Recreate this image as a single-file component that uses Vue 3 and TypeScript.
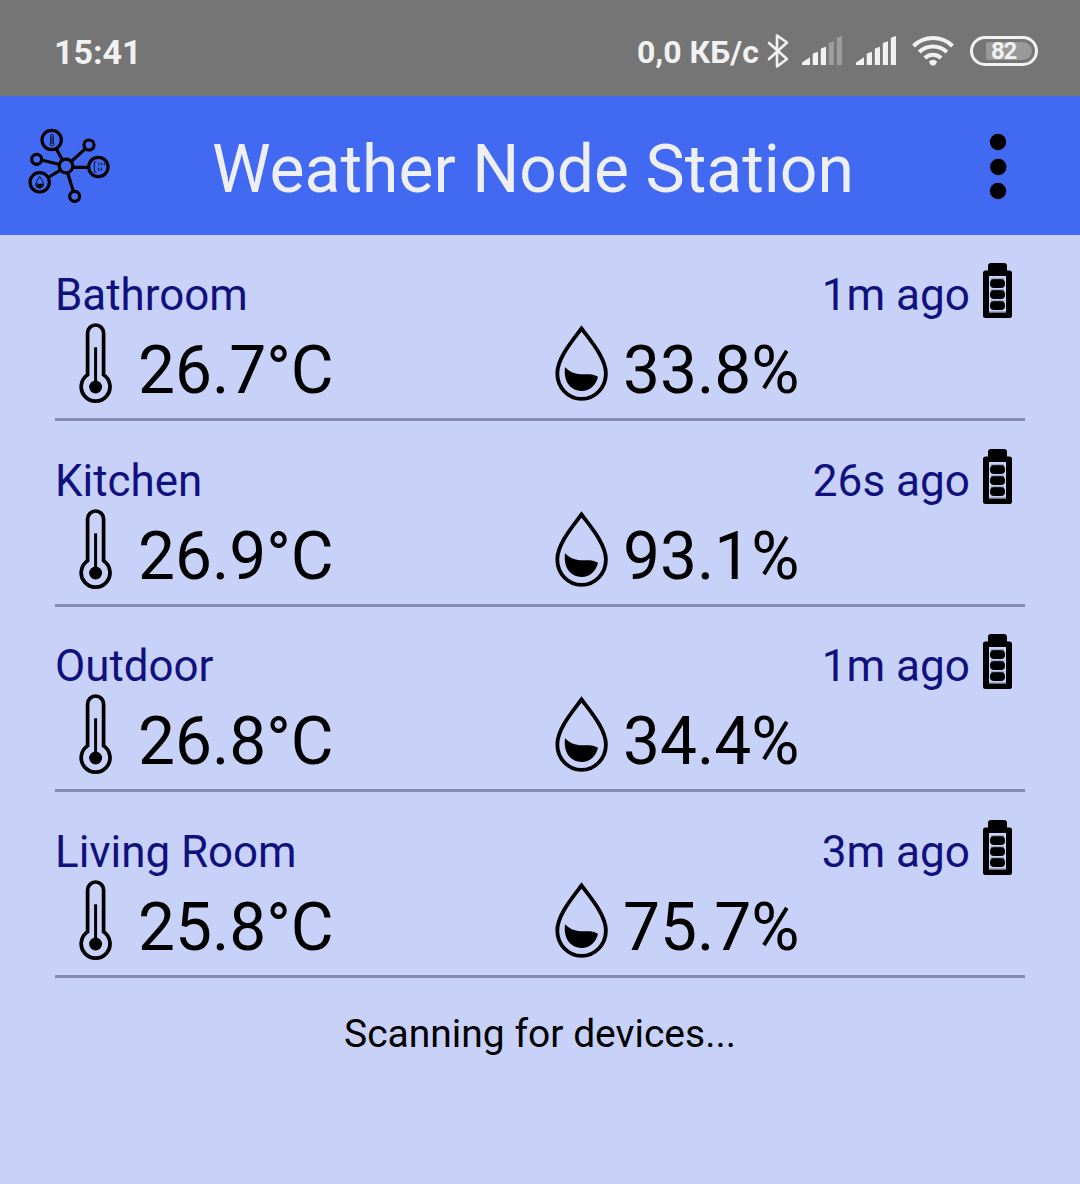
<script setup lang="ts">
interface Reading {
  name: string
  age: string
  temperature: string
  humidity: string
}

const readings: Reading[] = [
  { name: 'Bathroom', age: '1m ago', temperature: '26.7°C', humidity: '33.8%' },
  { name: 'Kitchen', age: '26s ago', temperature: '26.9°C', humidity: '93.1%' },
  { name: 'Outdoor', age: '1m ago', temperature: '26.8°C', humidity: '34.4%' },
  { name: 'Living Room', age: '3m ago', temperature: '25.8°C', humidity: '75.7%' },
]
</script>

<template>
  <div class="screen">
    <div class="status">
      <span class="clock">15:41</span>
      <span class="rate">0,0 КБ/с</span>
      <svg class="bluetooth" width="22" height="36" viewBox="0 0 22 36" fill="none" stroke="#f1f1f1" stroke-width="2.6" stroke-linejoin="round" stroke-linecap="round">
        <path d="M2 10 20 26 10 33.5V2.5L20 9.5 2 26" />
      </svg>
      <svg class="signal" width="41" height="30" viewBox="0 0 41 30" fill="#f1f1f1">
        <path d="M0 29v-2.500L8 21.300V29zM10.700 29V18.500q0-.8.8-1.200L16 15.800V29zM18.800 29V13.500q0-.8.8-1.200L24 10.800V29z" />
        <path opacity=".32" d="M26.800 29V8q0-.8.8-1.200L32 5.200V29zM34.800 29V2.800q0-.8.8-1.200L40 0V29z" />
      </svg>
      <svg class="signal" width="41" height="30" viewBox="0 0 41 30" fill="#f1f1f1">
        <path d="M0 29v-2.500L8 21.300V29zM10.700 29V18.500q0-.8.8-1.200L16 15.800V29zM18.800 29V13.500q0-.8.8-1.200L24 10.800V29zM26.800 29V8q0-.8.8-1.200L32 5.200V29zM34.800 29V2.800q0-.8.8-1.200L40 0V29z" />
      </svg>
      <svg class="wifi" width="42" height="31" viewBox="0 0 42 31" fill="none" stroke="#f1f1f1" stroke-width="4.200">
        <path d="M1.500 10.900A28 28 0 0 1 40.500 10.900M7.200 17A20 20 0 0 1 34.800 17M12.800 23A12 12 0 0 1 29.200 23" />
        <path d="M16.800 26.700q4.200-4 8.400 0l-1.700 2.700q-2.500 2.400-5 0z" fill="#f1f1f1" stroke="none" />
      </svg>
      <div class="charge"><span class="level">82</span></div>
    </div>

    <header class="bar">
      <svg class="logo" width="100" height="92" viewBox="0 0 300 276" fill="none" stroke="#000" stroke-width="9.500">
        <path d="M109 86 126 118M194 88 154 124M67 121 116 133M87 171 120 151M161 142H205M143 159 160 214" />
        <circle cx="138" cy="138" r="20.500" />
        <circle cx="95" cy="60" r="29" />
        <circle cx="235" cy="141" r="29" />
        <circle cx="59" cy="187" r="29" />
        <circle cx="207" cy="75" r="15" />
        <circle cx="50" cy="118" r="15" />
        <circle cx="164" cy="229" r="15" />
        <g stroke-width="2.500">
          <path d="M92 67V45q4-6 8 0v22q5 8-4 12-10-4-4-12M96 50v22" />
          <path d="M229 126h-6v30h6M237 128v8M245 128v8M253 128v8M236 143v10M244 143v10" />
          <path d="M59 169q-24 34 0 36 24-2 0-36" />
          <path d="M50 191q8 4 18 1-3 11-9 11-8-1-9-12z" fill="#000" />
        </g>
      </svg>
      <h1 class="title">Weather Node Station</h1>
      <svg class="menu" width="18" height="68" viewBox="0 0 18 68">
        <circle cx="9" cy="9" r="8.200" />
        <circle cx="9.300" cy="34" r="8.200" />
        <circle cx="9" cy="58" r="8.200" />
      </svg>
    </header>

    <main class="list">
      <section v-for="reading in readings" :key="reading.name" class="row">
        <div class="head">
          <span class="name">{{ reading.name }}</span>
          <span class="age">{{ reading.age }}</span>
          <svg class="battery" width="29" height="55" viewBox="0 0 29 55">
            <path fill-rule="evenodd" d="M8 0h13q3 0 3 3v4.500h2.500q2.500 0 2.500 2.500v42.500q0 2.500-2.500 2.500h-24Q0 55 0 52.500V10q0-2.500 2.500-2.500H5V3q0-3 3-3zM6 13v36.500h17V13z" />
            <path fill="#777c95" d="M8 15.500h13v2H8zM8 26.500h13v2H8zM8 37.500h13v2H8zM6 48.500h17v1H6z" />
            <rect x="7" y="16.300" width="15" height="8.700" rx="4" />
            <rect x="7" y="27.300" width="15" height="8.700" rx="4" />
            <rect x="7" y="38.300" width="15" height="8.700" rx="4" />
          </svg>
        </div>
        <div class="values">
          <div class="value">
            <svg class="thermometer" width="34" height="82" viewBox="0 0 34 82" fill="none" stroke="#000" stroke-width="3.700">
              <path d="M8.600 52.800V11a8 8 0 0 1 16 0V52.800A14.400 14.400 0 1 1 8.600 52.800z" />
              <path d="M16.600 25.300V62" stroke-width="3" />
              <circle cx="16.600" cy="65" r="6.500" fill="#000" stroke="none" />
            </svg>
            <span class="figure">{{ reading.temperature }}</span>
          </div>
          <div class="value">
            <svg class="drop" width="54" height="77" viewBox="0 0 54 77">
              <path fill="none" stroke="#000" stroke-width="3.800" d="M26.500 3.500C18 15 2.300 33 2.300 48.500A24.200 25.300 0 0 0 50.900 48.500C50.900 33 35 15 26.500 3.500z" />
              <path d="M10 42.300C14 46.500 19 49 25 49.200 31 49.500 37 48 43 51.700 41 60 35 66 26.500 66 17 66 8 58 10 42.300z" />
            </svg>
            <span class="figure">{{ reading.humidity }}</span>
          </div>
        </div>
      </section>
      <p class="scan">Scanning for devices...</p>
    </main>
  </div>
</template>

<style>
body {
  margin: 0;
  background: #c8d1f8;
}
</style>

<style scoped>
.screen {
  width: 1080px;
  height: 1184px;
  overflow: hidden;
  background: #c8d1f8;
  font-family: Roboto, sans-serif;
  color: #000;
}
svg {
  display: block;
  flex: none;
}
.status {
  display: flex;
  box-sizing: border-box;
  height: 96px;
  padding: 0 42px 0 54px;
  background: #757575;
  color: #f1f1f1;
  font-size: 34px;
  font-weight: 700;
  line-height: 40px;
  white-space: nowrap;
}
.clock {
  width: 583px;
  padding-top: 32px;
}
.rate {
  width: 130px;
  padding-top: 32px;
  font-size: 32px;
}
.bluetooth {
  margin-top: 33px;
}
.signal {
  margin: 36px 0 0 13px;
}
.wifi {
  margin: 35px 0 0 15px;
}
.charge {
  box-sizing: border-box;
  width: 68px;
  height: 30px;
  margin: 36px 0 0 16px;
  padding: 3px;
  border: 3px solid #f1f1f1;
  border-radius: 15px;
}
.level {
  display: block;
  box-sizing: border-box;
  width: 46px;
  height: 18px;
  margin-left: 10px;
  padding-left: 5px;
  border-radius: 2px 9px 9px 2px;
  background: #999;
  font-size: 24px;
  letter-spacing: -1.200px;
  line-height: 19px;
}
.bar {
  display: flex;
  height: 139px;
  background: #4169f1;
}
.logo {
  margin: 24px 0 0 20px;
}
.title {
  width: 777px;
  margin: 35px 0 0 92px;
  color: #eeeff3;
  font-size: 66px;
  font-weight: 400;
  line-height: 78px;
  white-space: nowrap;
}
.menu {
  margin-top: 37px;
}
.list {
  padding: 0 55px;
}
.row {
  box-sizing: border-box;
  height: 185.750px;
  padding-top: 27.850px;
  border-bottom: 3px solid #878bb0;
}
.head {
  display: flex;
  height: 59px;
  padding-right: 13px;
  color: #10107f;
  font-size: 43.900px;
  line-height: 52px;
}
.name,
.age {
  padding-top: 6px;
}
.age {
  margin-left: auto;
  font-size: 44.100px;
}
.battery {
  margin-left: 13px;
}
.values {
  display: flex;
}
.value {
  display: flex;
  width: 476px;
}
.thermometer {
  margin: 0 25px 0 24px;
}
.drop {
  margin: 3px 14px 0 24px;
}
.figure {
  padding-top: 10px;
  font-size: 65.800px;
  line-height: 78px;
}
.scan {
  margin: 32px 0 0;
  text-align: center;
  font-size: 39px;
  line-height: 48px;
}
</style>
